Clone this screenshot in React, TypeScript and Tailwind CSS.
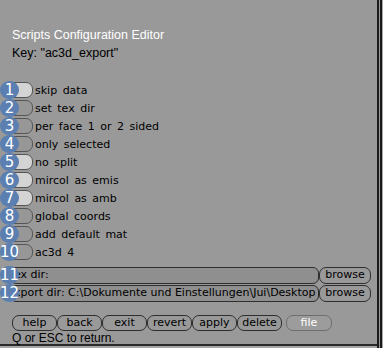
const toggles = [
  { label: "skip data", on: true },
  { label: "set tex dir", on: false },
  { label: "per face 1 or 2 sided", on: false },
  { label: "only selected", on: false },
  { label: "no split", on: true },
  { label: "mircol as emis", on: true },
  { label: "mircol as amb", on: true },
  { label: "global coords", on: false },
  { label: "add default mat", on: false },
  { label: "ac3d 4", on: false },
];

const buttons = ["help", "back", "exit", "revert", "apply", "delete"];

function Badge({ n }: { n: number }) {
  return (
    <div className="absolute left-0 top-1/2 flex h-[18px] w-[19px] -translate-y-1/2 items-center justify-center rounded-full bg-[#5b7fb0] text-[15px] leading-none text-white">
      {n}
    </div>
  );
}

export default function App() {
  return (
    <div
      className="flex h-[348px] w-[383px] bg-[#a6a6a6] text-black"
      style={{ fontFamily: '"DejaVu Sans", sans-serif' }}
    >
      <div className="flex h-[346px] w-[377px] flex-col border-b-2 border-[#2a2a2a] bg-[#999999]">
        <div
          className="pl-[12px] pt-[28px] text-[12.5px] leading-[15px] text-white"
          style={{ fontFamily: '"Liberation Sans", sans-serif' }}
        >
          Scripts Configuration Editor
        </div>
        <div
          className="mt-[3px] pl-[12px] text-[12.5px] leading-[15px]"
          style={{ fontFamily: '"Liberation Sans", sans-serif' }}
        >
          Key: "ac3d_export"
        </div>

        <div className="mt-[20px] flex flex-col">
          {toggles.map((t, i) => (
            <div key={t.label} className="relative flex h-[18px] items-center pl-[10px]">
              <div
                className={
                  "h-[16px] w-[23px] rounded-r-[7px] rounded-l-[3px] border border-[#555] " +
                  (t.on ? "bg-[#d4d4d4]" : "bg-[#979797]")
                }
              />
              <span className="ml-[2px] text-[11px] leading-none [word-spacing:2px]">{t.label}</span>
              <Badge n={i + 1} />
            </div>
          ))}
        </div>

        <div className="mt-[5px] flex flex-col">
          {["ex dir:", "xport dir: C:\\Dokumente und Einstellungen\\Jui\\Desktop"].map((v, i) => (
            <div key={v} className="relative flex h-[18px] items-center pl-[10px]">
              <div className="flex h-[17px] w-[309px] items-center overflow-hidden whitespace-nowrap rounded-[6px] border border-[#2e2e2e] bg-[#8f8f8f] pl-[3px] text-[11px]">
                {v}
              </div>
              <div className="flex h-[17px] w-[52px] items-center justify-center rounded-[7px] border border-[#2e2e2e] bg-[#999999] text-[11px]">
                browse
              </div>
              <Badge n={i + 11} />
            </div>
          ))}
        </div>

        <div className="mt-[13px] flex pl-[12px]">
          {buttons.map((b) => (
            <div
              key={b}
              className="flex h-[16px] w-[45px] items-center justify-center rounded-[7px] border border-[#2e2e2e] bg-[#999999] text-[11px]"
            >
              {b}
            </div>
          ))}
          <div className="ml-[4px] flex h-[16px] w-[46px] items-center justify-center rounded-[7px] border border-[#6e6e6e] bg-[#9c9c9c] text-[11px] text-white">
            file
          </div>
        </div>
        <div
          className="pl-[12px] text-[12px] leading-[14px]"
          style={{ fontFamily: '"Liberation Sans", sans-serif' }}
        >
          Q or ESC to return.
        </div>
      </div>
      <div className="h-full w-[2px] bg-[#1a1a1a]" />
      <div className="h-full w-[1px] bg-[#9a9a9a]" />
      <div className="h-full w-[2px] bg-[#1a1a1a]" />
      <div className="h-full flex-1 bg-[#a6a6a6]" />
    </div>
  );
}
